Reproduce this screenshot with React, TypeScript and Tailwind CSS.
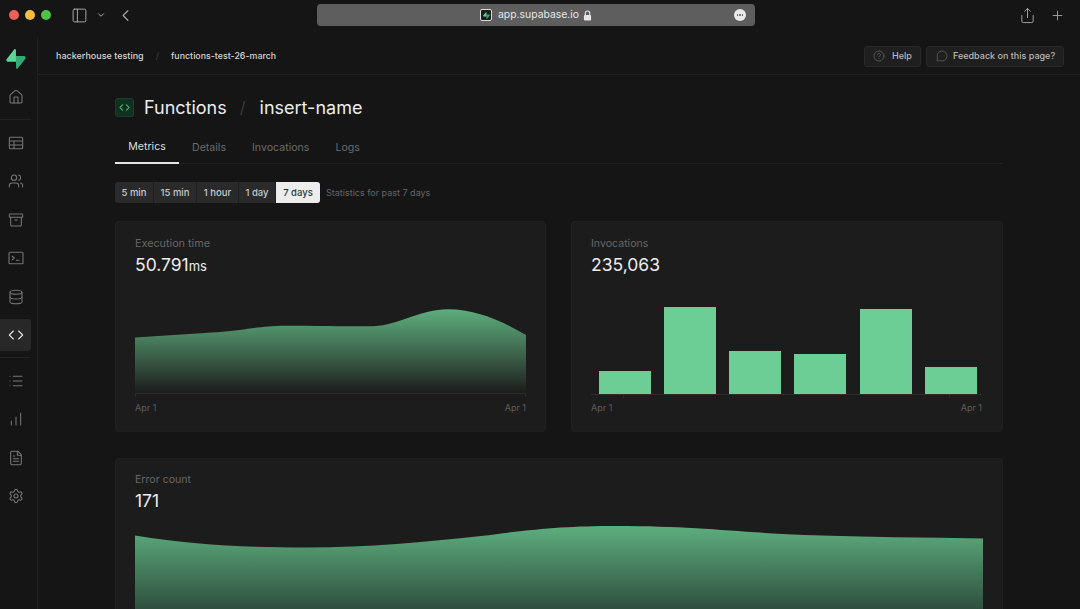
import {
  Archive,
  ChartNoAxesColumnIncreasing,
  ChevronDown,
  ChevronLeft,
  CircleHelp,
  Code,
  Database,
  FileText,
  Home,
  List,
  MessageCircle,
  PanelLeft,
  Plus,
  Settings,
  Share,
  Users,
} from "lucide-react";
import type { ComponentType } from "react";

type IconProps = { size?: number; strokeWidth?: number };

const bars = [
  { id: "a", height: "h-[23px]" },
  { id: "b", height: "h-[87px]" },
  { id: "c", height: "h-[43px]" },
  { id: "d", height: "h-[40px]" },
  { id: "e", height: "h-[85px]" },
  { id: "f", height: "h-[27px]" },
];

const ranges = [
  { label: "5 min", width: "w-[39px]" },
  { label: "15 min", width: "w-[43px]" },
  { label: "1 hour", width: "w-[42px]" },
  { label: "1 day", width: "w-[37px]" },
];

function SupabaseLogo({ className }: { className?: string }) {
  return (
    <svg viewBox="0 0 109 113" fill="none" className={className}>
      <path
        d="M63.7 110.3C60.8 113.9 55.05 111.9 54.98 107.3L53.97 40.06H99.19C107.38 40.06 111.95 49.52 106.86 55.94L63.7 110.3Z"
        fill="#35a873"
      />
      <path
        d="M45.32 2.07C48.18 -1.53 53.97 0.44 54.04 5.04L54.48 72.29H9.83C1.64 72.29 -2.93 62.83 2.17 56.42L45.32 2.07Z"
        fill="#58d795"
      />
    </svg>
  );
}

function TableIcon({ size, strokeWidth }: IconProps) {
  return (
    <svg width={size} height={size} viewBox="0 0 24 24" fill="none" stroke="currentColor" strokeWidth={strokeWidth}>
      <rect x="2" y="3.5" width="20" height="17" rx="1.5" />
      <path d="M2 9h20M2 15h20M9 9v11.5" />
    </svg>
  );
}

function TerminalIcon({ size, strokeWidth }: IconProps) {
  return (
    <svg width={size} height={size} viewBox="0 0 24 24" fill="none" stroke="currentColor" strokeWidth={strokeWidth}>
      <rect x="1.5" y="3.5" width="21" height="17" rx="1.5" />
      <path d="M6 9l3.5 3L6 15M12 15.5h5" />
    </svg>
  );
}

function LockIcon() {
  return (
    <svg viewBox="0 0 10 12" className="ml-[4px] h-[11px] w-[9px] text-[#e6e6e6]">
      <path d="M2.5 6V3.5a2.5 2.5 0 0 1 5 0V6" fill="none" stroke="currentColor" strokeWidth="1.2" />
      <rect x="1" y="5.5" width="8" height="6" rx="1" fill="currentColor" />
    </svg>
  );
}

function NavIcon({ icon: Icon, active }: { icon: ComponentType<IconProps>; active?: boolean }) {
  return (
    <div
      className={`flex h-[32px] w-[31px] items-center justify-center rounded-r-[3px] ${
        active ? "bg-[#282828] text-[#e4e4e4]" : "text-[#767676]"
      }`}
    >
      <Icon size={16} strokeWidth={1.6} />
    </div>
  );
}

function AreaChart({ id }: { id: string }) {
  return (
    <svg viewBox="0 0 391 100" className="block h-[100px] w-[391px]">
      <defs>
        <linearGradient id={id} x1="0" y1="9" x2="0" y2="93" gradientUnits="userSpaceOnUse">
          <stop offset="0" stopColor="#5dae7e" />
          <stop offset="0.5" stopColor="#40694f" />
          <stop offset="1" stopColor="#1c1c1c" />
        </linearGradient>
      </defs>
      <path
        d="M0 37.5L85 32C112 30 125 25.7 150 25.7C180 25.7 215 26.5 238 26.3C265 25 285 9.3 313 9.3C340 9.3 365 20 391 35V93H0Z"
        fill={`url(#${id})`}
      />
      <path d="M0.5 97V93.5H390.5V97" fill="none" stroke="#2c2c2c" />
    </svg>
  );
}

function ErrorChart() {
  return (
    <svg viewBox="0 0 848 90" className="block h-[90px] w-[848px]">
      <defs>
        <linearGradient id="errors" x1="0" y1="0" x2="0" y2="110" gradientUnits="userSpaceOnUse">
          <stop offset="0" stopColor="#5dae7e" />
          <stop offset="0.75" stopColor="#30503f" />
          <stop offset="1" stopColor="#1c1c1c" />
        </linearGradient>
      </defs>
      <path
        d="M0 9.5C60 19 110 21.5 170 21.5C235 21.5 290 16 346 10C400 3 430 0 481 0C560 0 600 6 669 9C730 11 790 11.5 848 12.5V90H0Z"
        fill="url(#errors)"
      />
    </svg>
  );
}

export default function App() {
  return (
    <div className="flex h-[609px] w-[1080px] flex-col overflow-hidden bg-[#151515] font-['Inter',sans-serif] text-[#e4e4e4]">
      {/* browser chrome */}
      <div className="flex h-[37px] shrink-0 items-start">
        <div className="flex h-[30px] w-[317px] shrink-0 items-center pl-[9px]">
          <span className="size-[10px] rounded-full bg-[#ee5f57]" />
          <span className="ml-[6px] size-[10px] rounded-full bg-[#f5bd41]" />
          <span className="ml-[6px] size-[10px] rounded-full bg-[#4fc244]" />
          <PanelLeft size={17} strokeWidth={1.4} className="ml-[20px] text-[#a8a8a8]" />
          <ChevronDown size={10} strokeWidth={2.4} className="ml-[8px] text-[#a8a8a8]" />
          <ChevronLeft size={19} strokeWidth={1.5} className="ml-[10px] text-[#a8a8a8]" />
        </div>
        <div className="mt-[4px] flex h-[22px] w-[438px] items-center rounded-[4px] bg-[#5e5e5e] pr-[9px]">
          <div className="ml-[163px] flex size-[12px] items-center justify-center rounded-[2px] border border-[#dcdcdc] bg-[#1c1c1c]">
            <SupabaseLogo className="size-[7px]" />
          </div>
          <span className="ml-[6px] text-[10.4px] text-[#e6e6e6]">app.supabase.io</span>
          <LockIcon />
          <div className="ml-auto flex size-[12px] items-center justify-center gap-[1px] rounded-full bg-[#e8e8e8]">
            <span className="size-[1.5px] rounded-full bg-[#555]" />
            <span className="size-[1.5px] rounded-full bg-[#555]" />
            <span className="size-[1.5px] rounded-full bg-[#555]" />
          </div>
        </div>
        <div className="ml-auto flex h-[30px] items-center gap-[14px] pr-[15px] text-[#a0a0a0]">
          <Share size={17} strokeWidth={1.4} />
          <Plus size={15} strokeWidth={1.5} />
        </div>
      </div>

      <div className="flex min-h-0 flex-1">
        {/* sidebar */}
        <aside className="flex w-[38px] shrink-0 flex-col border-r border-[#202020]">
          <div className="flex h-[44px] w-[31px] items-center justify-center">
            <SupabaseLogo className="h-[20px] w-[20px]" />
          </div>
          <div className="flex flex-col">
            <NavIcon icon={Home} />
            <div className="mt-[6px] h-px w-[31px] bg-[#222]" />
            <div className="mt-[7px] flex flex-col gap-[6.4px]">
              <NavIcon icon={TableIcon} />
              <NavIcon icon={Users} />
              <NavIcon icon={Archive} />
              <NavIcon icon={TerminalIcon} />
              <NavIcon icon={Database} />
              <NavIcon icon={Code} active />
            </div>
            <div className="mt-[6px] h-px w-[31px] bg-[#222]" />
            <div className="mt-[7px] flex flex-col gap-[6.4px]">
              <NavIcon icon={List} />
              <NavIcon icon={ChartNoAxesColumnIncreasing} />
              <NavIcon icon={FileText} />
              <NavIcon icon={Settings} />
            </div>
          </div>
        </aside>

        <main className="min-w-0 flex-1">
          {/* breadcrumb bar */}
          <div className="flex h-[38px] items-center border-b border-[#212121] pl-[18px] pr-[16px] pt-[1px] text-[9px] font-medium text-[#d4d4d4]">
            <span>hackerhouse testing</span>
            <span className="mx-[12px] text-[#3c3c3c]">/</span>
            <span className="text-[8.85px]">functions-test-26-march</span>
            <div className="ml-auto flex gap-[5px] text-[#b8b8b8]">
              <div className="flex h-[21px] w-[57px] items-center gap-[7px] rounded-[3px] border border-[#292929] bg-[#1f1f1f] pl-[8px]">
                <CircleHelp size={12} strokeWidth={1.3} className="text-[#6e6e6e]" />
                <span>Help</span>
              </div>
              <div className="flex h-[21px] w-[138px] items-center gap-[5px] rounded-[3px] border border-[#292929] bg-[#1f1f1f] pl-[9px]">
                <MessageCircle size={12} strokeWidth={1.3} className="text-[#6e6e6e]" />
                <span>Feedback on this page?</span>
              </div>
            </div>
          </div>

          <div className="pl-[77px] pr-[77px]">
            {/* title */}
            <div className="mt-[22px] flex h-[20px] items-center">
              <div className="flex size-[19px] items-center justify-center rounded-[3px] border border-[#17402c] bg-[#12301f] text-[#4fd08f]">
                <Code size={11} strokeWidth={2.2} />
              </div>
              <span className="ml-[10px] text-[18px] text-[#ececec]">Functions</span>
              <span className="ml-[13px] text-[16px] text-[#3a3a3a]">/</span>
              <span className="ml-[14px] text-[18px] text-[#ececec]">insert-name</span>
            </div>

            {/* tabs */}
            <div className="mt-[20px] flex h-[27px] border-b border-[#202020] text-[10.6px] text-[#6b6b6b]">
              <div className="flex h-[27px] w-[64px] justify-center border-b-2 border-[#e4e4e4] pt-[2px] text-[#dedede]">
                Metrics
              </div>
              <div className="ml-[13px] pt-[3px]">Details</div>
              <div className="ml-[26px] pt-[3px]">Invocations</div>
              <div className="ml-[26px] pt-[3px]">Logs</div>
            </div>

            {/* time range */}
            <div className="mt-[18px] flex h-[21px] items-center">
              <div className="flex h-[21px] overflow-hidden rounded-[3px] bg-[#2a2a2a] text-[9.5px] font-medium text-[#c8c8c8]">
                {ranges.map((range) => (
                  <div
                    key={range.label}
                    className={`flex items-center justify-center border-r border-[#1e1e1e] pt-[1px] ${range.width}`}
                  >
                    {range.label}
                  </div>
                ))}
                <div className="flex w-[44px] items-center justify-center bg-[#ededed] pt-[1px] text-[#333]">
                  7 days
                </div>
              </div>
              <span className="ml-[6px] pt-[1px] text-[9px] text-[#656565]">Statistics for past 7 days</span>
            </div>

            {/* metric cards */}
            <div className="mt-[18px] flex gap-[25px]">
              <div className="h-[211px] w-[431px] rounded-[4px] border border-[#202020] bg-[#1c1c1c] pl-[19px] pt-[15px]">
                <div className="text-[10.8px] leading-[14px] text-[#666]">Execution time</div>
                <div className="mt-[3px] text-[17.5px] leading-[22px] text-[#ececec]">
                  50.791<span className="text-[13px]">ms</span>
                </div>
                <div className="mt-[23px]">
                  <AreaChart id="execution" />
                </div>
                <div className="mt-[1px] flex w-[391px] justify-between text-[9px] text-[#5c5c5c]">
                  <span>Apr 1</span>
                  <span>Apr 1</span>
                </div>
              </div>

              <div className="h-[211px] w-[432px] rounded-[4px] border border-[#202020] bg-[#1c1c1c] pl-[19px] pt-[15px]">
                <div className="text-[10.6px] leading-[14px] text-[#666]">Invocations</div>
                <div className="mt-[3px] text-[17.5px] leading-[22px] text-[#ececec]">235,063</div>
                <div className="mt-[28px] flex h-[91px] w-[391px] items-end gap-[13.3px] border-b border-[#2c2c2c] pl-[7.5px]">
                  {bars.map((bar) => (
                    <div key={bar.id} className={`w-[52px] bg-[#6dce95] ${bar.height}`} />
                  ))}
                </div>
                <div className="flex h-[3px] w-[391px] justify-between px-[32px]">
                  <span className="w-px bg-[#2c2c2c]" />
                  <span className="w-px bg-[#2c2c2c]" />
                </div>
                <div className="mt-[3px] flex w-[391px] justify-between text-[9px] text-[#5c5c5c]">
                  <span>Apr 1</span>
                  <span>Apr 1</span>
                </div>
              </div>
            </div>

            {/* error count */}
            <div className="mt-[26px] h-[200px] w-[888px] rounded-[4px] border border-[#202020] bg-[#1c1c1c] pl-[19px] pt-[14px]">
              <div className="text-[10.6px] leading-[14px] text-[#666]">Error count</div>
              <div className="mt-[3px] text-[17.5px] leading-[22px] text-[#ececec]">171</div>
              <div className="mt-[14px]">
                <ErrorChart />
              </div>
            </div>
          </div>
        </main>
      </div>
    </div>
  );
}
